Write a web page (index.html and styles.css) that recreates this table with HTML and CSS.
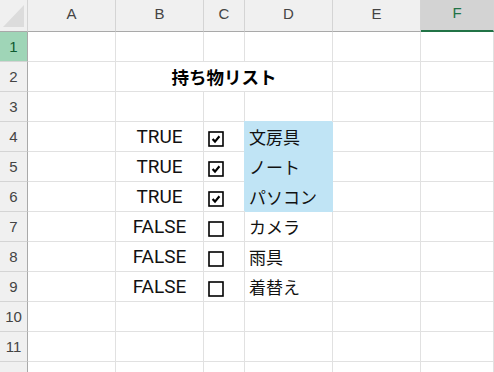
FILE: index.html
```html
<!DOCTYPE html>
<html lang="ja">
<head>
    <meta charset="UTF-8">
    <meta name="viewport" content="width=device-width, initial-scale=1.0">
    <title>持ち物リスト</title>
    <link rel="stylesheet" href="styles.css">
</head>
<body>

<div class="sheet">
    <!-- column headers -->
    <div class="hd corner"><span class="tri"></span></div>
    <div class="hd">A</div>
    <div class="hd">B</div>
    <div class="hd">C</div>
    <div class="hd">D</div>
    <div class="hd">E</div>
    <div class="hd active">F</div>

    <div class="rh active">1</div>
    <div class="c"></div><div class="c"></div><div class="c"></div><div class="c"></div><div class="c"></div><div class="c"></div>

    <div class="rh">2</div>
    <div class="c"></div>
    <div class="c title span3">持ち物リスト</div>
    <div class="c"></div><div class="c"></div>

    <div class="rh">3</div>
    <div class="c"></div><div class="c"></div><div class="c"></div><div class="c"></div><div class="c"></div><div class="c"></div>

    <div class="rh">4</div>
    <div class="c"></div>
    <div class="c bool">TRUE</div>
    <div class="c box"><svg class="chk" width="16" height="16" viewBox="0 0 16 16"><rect x="1" y="1" width="14" height="14" fill="#fff" stroke="#000" stroke-width="1.6"/><path d="M4.6 7.9 L7 10.6 L11.4 5.2" fill="none" stroke="#000" stroke-width="2.2" stroke-linejoin="miter"/></svg></div>
    <div class="c item fill">文房具</div>
    <div class="c"></div><div class="c"></div>

    <div class="rh">5</div>
    <div class="c"></div>
    <div class="c bool">TRUE</div>
    <div class="c box"><svg class="chk" width="16" height="16" viewBox="0 0 16 16"><rect x="1" y="1" width="14" height="14" fill="#fff" stroke="#000" stroke-width="1.6"/><path d="M4.6 7.9 L7 10.6 L11.4 5.2" fill="none" stroke="#000" stroke-width="2.2" stroke-linejoin="miter"/></svg></div>
    <div class="c item fill">ノート</div>
    <div class="c"></div><div class="c"></div>

    <div class="rh">6</div>
    <div class="c"></div>
    <div class="c bool">TRUE</div>
    <div class="c box"><svg class="chk" width="16" height="16" viewBox="0 0 16 16"><rect x="1" y="1" width="14" height="14" fill="#fff" stroke="#000" stroke-width="1.6"/><path d="M4.6 7.9 L7 10.6 L11.4 5.2" fill="none" stroke="#000" stroke-width="2.2" stroke-linejoin="miter"/></svg></div>
    <div class="c item fill">パソコン</div>
    <div class="c"></div><div class="c"></div>

    <div class="rh">7</div>
    <div class="c"></div>
    <div class="c bool">FALSE</div>
    <div class="c box"><svg class="chk" width="16" height="16" viewBox="0 0 16 16"><rect x="1" y="1" width="14" height="14" fill="#fff" stroke="#000" stroke-width="1.6"/></svg></div>
    <div class="c item">カメラ</div>
    <div class="c"></div><div class="c"></div>

    <div class="rh">8</div>
    <div class="c"></div>
    <div class="c bool">FALSE</div>
    <div class="c box"><svg class="chk" width="16" height="16" viewBox="0 0 16 16"><rect x="1" y="1" width="14" height="14" fill="#fff" stroke="#000" stroke-width="1.6"/></svg></div>
    <div class="c item">雨具</div>
    <div class="c"></div><div class="c"></div>

    <div class="rh">9</div>
    <div class="c"></div>
    <div class="c bool">FALSE</div>
    <div class="c box"><svg class="chk" width="16" height="16" viewBox="0 0 16 16"><rect x="1" y="1" width="14" height="14" fill="#fff" stroke="#000" stroke-width="1.6"/></svg></div>
    <div class="c item">着替え</div>
    <div class="c"></div><div class="c"></div>

    <div class="rh">10</div>
    <div class="c"></div><div class="c"></div><div class="c"></div><div class="c"></div><div class="c"></div><div class="c"></div>

    <div class="rh">11</div>
    <div class="c"></div><div class="c"></div><div class="c"></div><div class="c"></div><div class="c"></div><div class="c"></div>

    <!-- row 12 is below the fold, only its top edge shows -->
    <div class="rh"></div>
    <div class="c"></div><div class="c"></div><div class="c"></div><div class="c"></div><div class="c"></div><div class="c"></div>
</div>

</body>
</html>
```

FILE: styles.css
```css
body {
    margin: 0;
    background-color: #fff;
    overflow: hidden;
    font-family: "Noto Sans CJK JP", "Noto Sans", sans-serif;
}
.sheet {
    display: grid;
    grid-template-columns: 28px 88px 88px 41px 88px 88px 1fr;
    grid-template-rows: 32px repeat(12, 30px);
    width: 494px;
    height: 372px;
    overflow: hidden;
}
.sheet > div {
    box-sizing: border-box;
    border-right: 1px solid #e1e1e1;
    border-bottom: 1px solid #e1e1e1;
    display: flex;
    align-items: center;
}

/* headers */
.hd {
    background-color: #f0f0f0;
    justify-content: center;
    padding-bottom: 5px;
    font-family: "Liberation Sans", Arial, sans-serif;
    font-size: 15px;
    color: #444;
    border-right-color: #d4d4d4 !important;
    border-bottom-color: #a9a9a9 !important;
}
.hd.corner {
    position: relative;
}
.tri {
    position: absolute;
    left: 3px;
    top: 5px;
    width: 21px;
    height: 22px;
    background-color: #dcdcdc;
    clip-path: polygon(100% 0, 100% 100%, 0 100%);
}
.hd.active {
    background-color: #d3d3d3;
    color: #217346;
    border-bottom: 2px solid #217346 !important;
}
.rh {
    background-color: #f0f0f0;
    justify-content: center;
    font-family: "Liberation Sans", Arial, sans-serif;
    font-size: 15px;
    color: #444;
    border-right-color: #a9a9a9 !important;
    border-bottom-color: #d4d4d4 !important;
}
.rh.active {
    background-color: #9fd5b7;
    color: #0f5a30;
}

/* cells */
.span3 {
    grid-column: span 3;
}
.title {
    justify-content: center;
    font-size: 17.5px;
    font-weight: bold;
    color: #000;
}
.bool {
    justify-content: center;
    font-family: Roboto, "Liberation Sans", sans-serif;
    font-size: 19px;
    color: #111;
}
.box {
    padding-left: 4px;
    padding-top: 5px;
}
.chk {
    display: block;
}
.item {
    padding-left: 4px;
    font-size: 17px;
    color: #111;
}
.fill {
    background-color: #c0e4f5;
    border-color: #c0e4f5 !important;
    box-shadow: -1px -1px 0 #c0e4f5;
}
```
